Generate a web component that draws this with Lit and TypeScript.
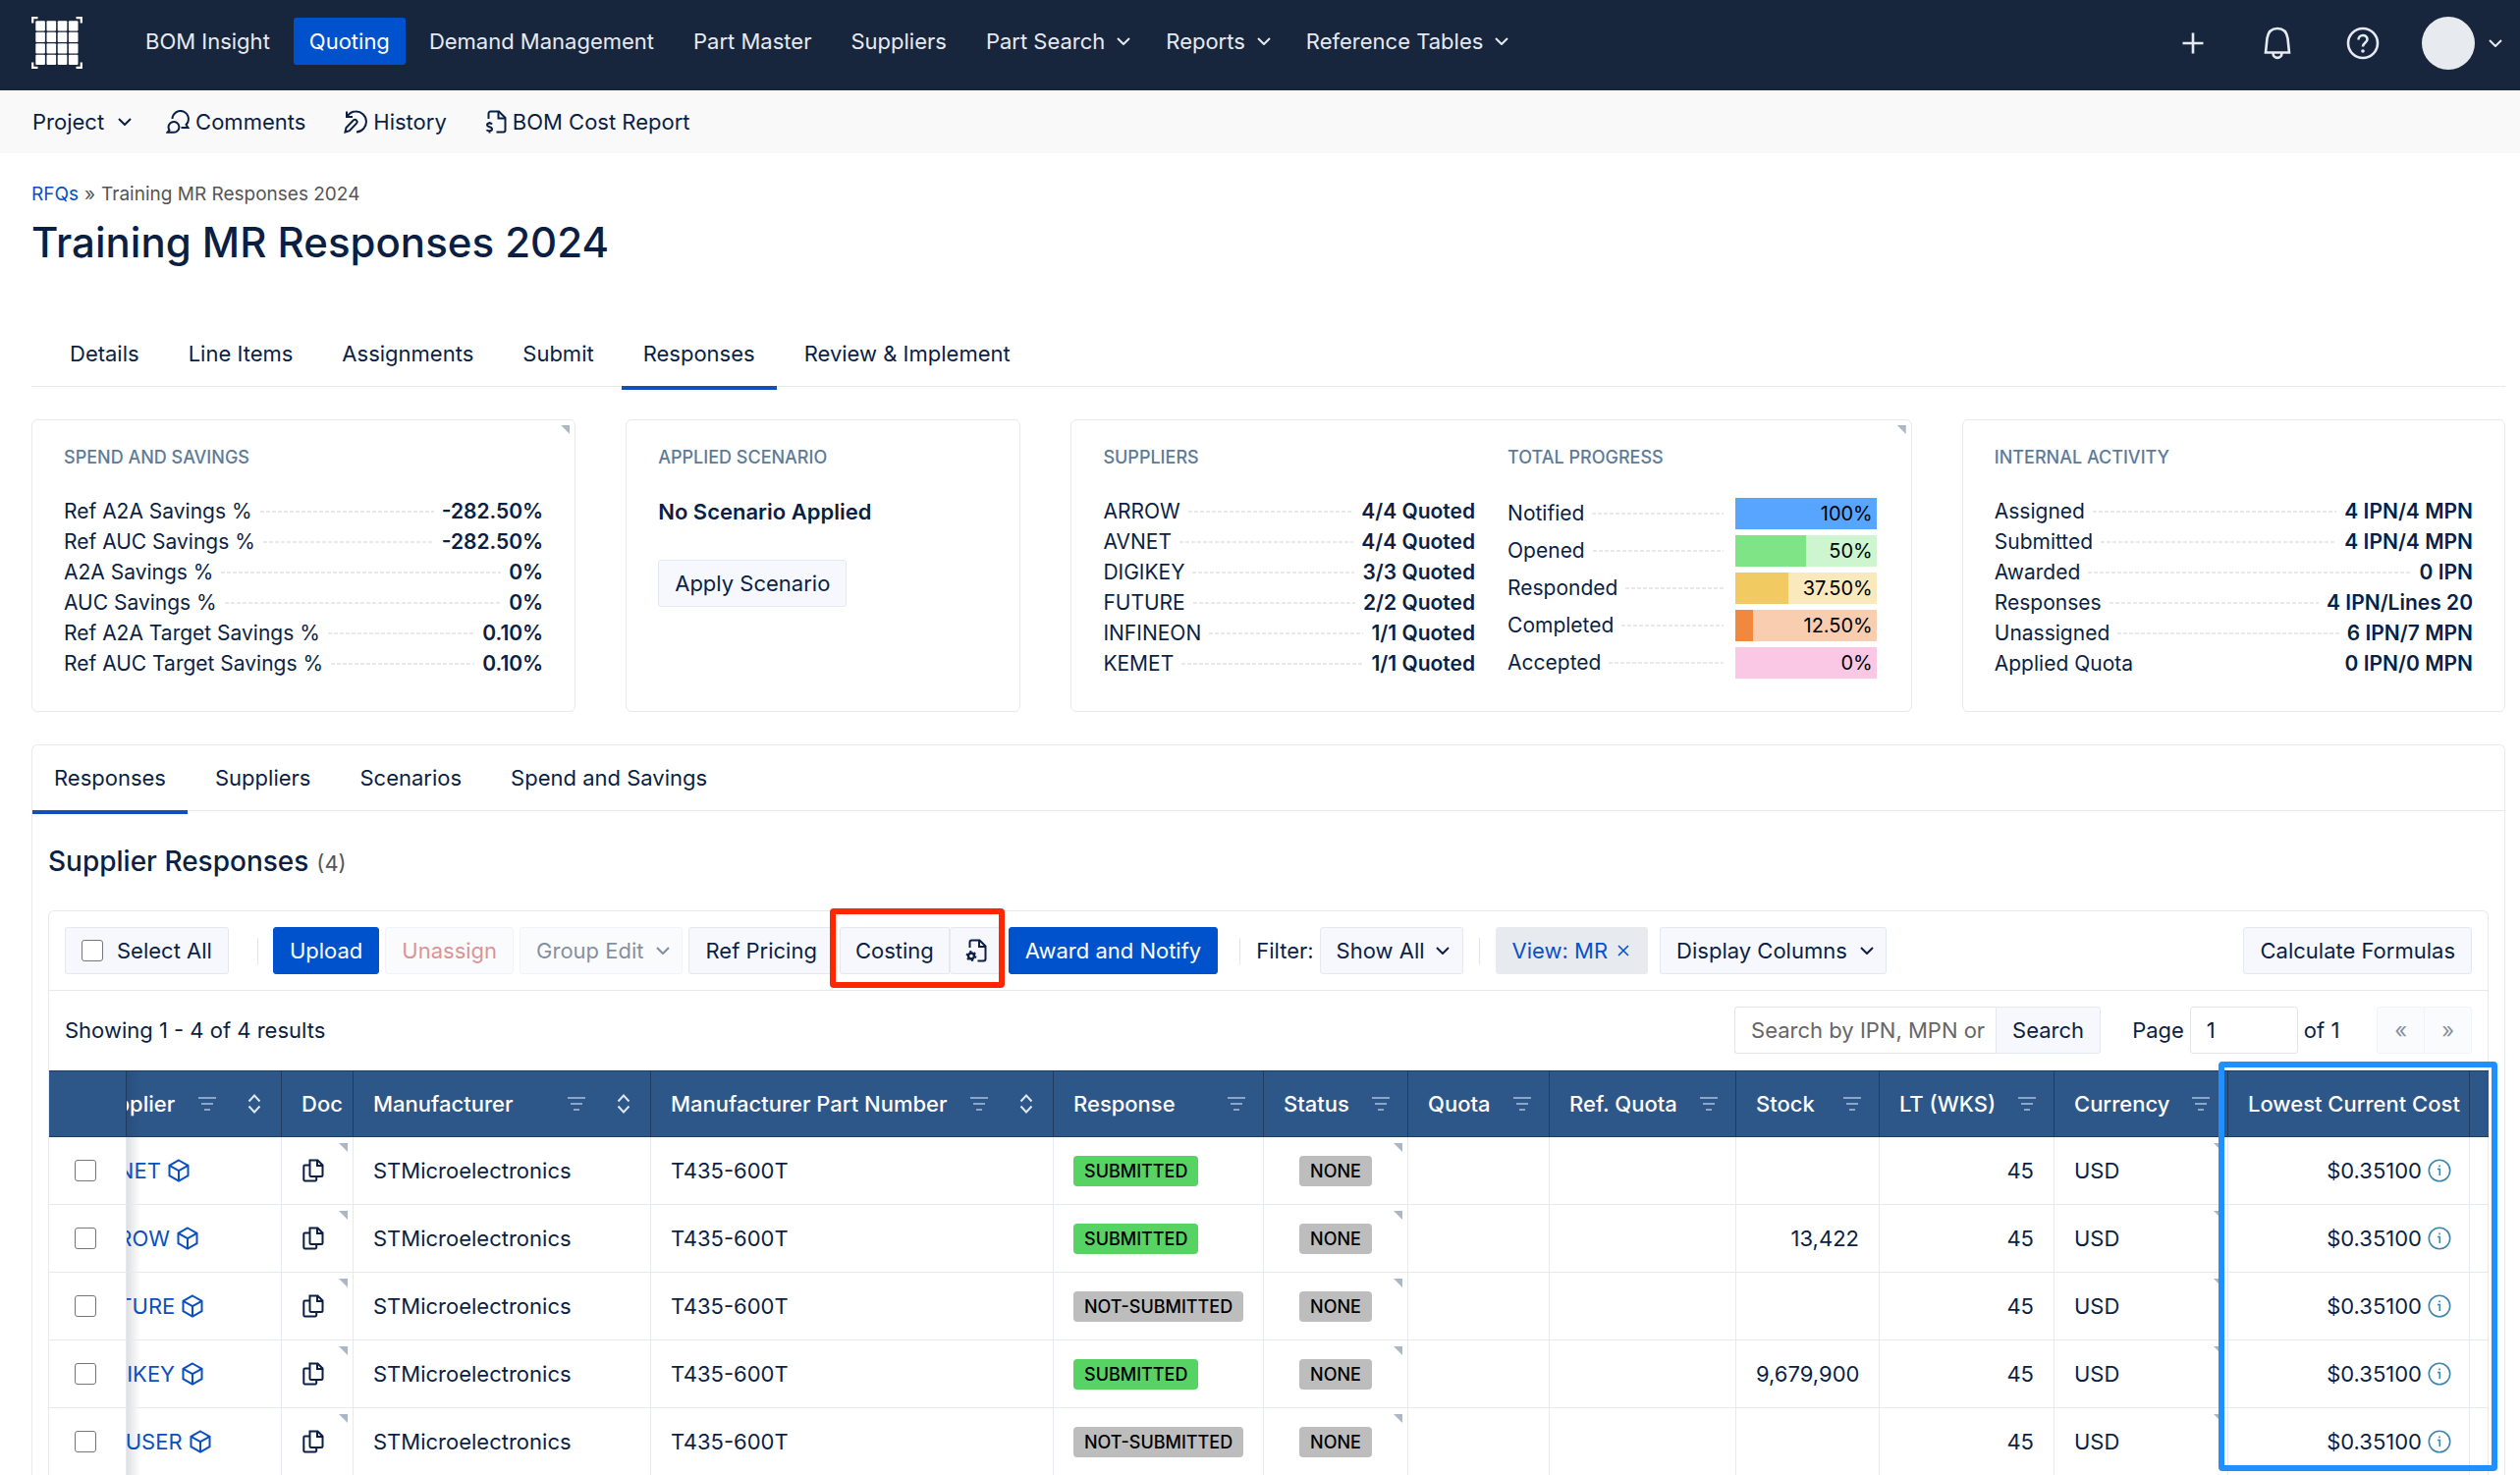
import { LitElement, html, css, svg, nothing, TemplateResult } from "lit";
import { customElement } from "lit/decorators.js";
import { styleMap } from "lit/directives/style-map.js";

const icon = (cls: string, w: number, h: number, body: TemplateResult | TemplateResult[]) => html`
  <svg class="icon ${cls}" width=${w} height=${h} viewBox="0 0 ${w} ${h}" aria-hidden="true">${body}</svg>`;

const chevron = () => icon("", 14, 8, svg`<path d="M1 1L7 7L13 1" />`);

const comments = () => icon("", 24, 24, svg`
  <path d="M6.5 9A8.2 8.2 0 1 1 20.5 15L22.5 18H15.5" />
  <path d="M3.5 20.5L1.5 22.8H8A5.4 5.4 0 1 0 3 19.5Z" />`);

const history = () => icon("", 24, 24, svg`
  <path d="M3 1.5V7H9" />
  <path d="M3.5 6.5C6 3 9 1.5 12 1.5A10.3 10.3 0 0 1 13 22.4" />
  <path d="M1.5 22.5L2.5 18L10 10.2A2.3 2.3 0 0 1 13.2 13.4L5.8 21.2Z" />`);

const costReport = () => icon("", 22, 24, svg`
  <path d="M3.5 9V3.5A2 2 0 0 1 5.500 1.500H14L20.500 8V20.500A2 2 0 0 1 18.500 22.500H11.500" />
  <path d="M13.500 1.500V8.500H20.500" />
  <path d="M7 14.500C6 13 2 13 2 15.300C2 17.800 7 16.800 7 19.400C7 21.700 2.500 21.700 1.500 20.200M4.500 12V13.500M4.500 21.500V23.500" />`);

const costingSettings = () => icon("", 22, 24, svg`
  <path d="M4.500 9V3.500A2 2 0 0 1 6.500 1.500H14.500L20.500 7.500V20.500A2 2 0 0 1 18.500 22.500H12.500" />
  <path d="M14 1.500V8H20.500" />
  <circle cx="6" cy="17.500" r="3" stroke-width="2.400" />
  <circle cx="6" cy="17.500" r="4.600" stroke-width="1.600" stroke-dasharray="2.200 2.617" />`);

const cube = () => icon("", 22, 24, svg`
  <path d="M11 1.500L20.500 6.800V17.200L11 22.500L1.500 17.200V6.800Z" />
  <path d="M1.500 6.800L11 12.200L20.500 6.800M11 12.200V22.500" />`);

const copyDoc = () => icon("", 24, 24, svg`
  <path d="M8.500 1.500H16.500L21.500 6.500V16.500A1.500 1.500 0 0 1 20 18H10A1.500 1.500 0 0 1 8.500 16.500Z" />
  <path d="M16 1.500V7H21.500" />
  <path d="M8.500 6.500H3.500A1.200 1.200 0 0 0 2.300 7.700V21.300A1.200 1.200 0 0 0 3.500 22.500H14A1.200 1.200 0 0 0 15.200 21.300V18" />`);

const info = () => icon("info", 24, 24, svg`
  <circle cx="12" cy="12" r="10.700" stroke-width="1.600" />
  <path d="M10 10.500H12.300V17M12.100 6.500V8.300" stroke-width="1.600" />`);

const filterIcon = () => icon("filter", 18, 16, svg`
  <path d="M0 2H18M3 8H15M6 14H12" />`);

const sortIcon = () => icon("sort", 14, 20, svg`
  <path d="M1.500 7.500L7 1.500L12.500 7.500M1.500 12.500L7 18.500L12.500 12.500" />`);

const plus = () => icon("", 24, 24, svg`<path d="M12 1.500V22.500M1.500 12H22.500" stroke-width="2.600" />`);

const bell = () => icon("", 28, 34, svg`
  <path d="M2 26.500H26L24.500 12C23.500 5.500 19.500 2 14 2S4.500 5.500 3.500 12Z" stroke-width="2.600" />
  <path d="M9.500 27C9.500 33.500 18.500 33.500 18.500 27" stroke-width="2.600" />`);

const help = () => icon("", 34, 34, svg`
  <circle cx="17" cy="17" r="15" stroke-width="2.600" />
  <path d="M12.500 13.500C12.500 7.500 21.500 7.500 21.500 13C21.500 16.500 17 16.500 17 20.500" stroke-width="2.600" />
  <circle cx="17" cy="25" r="1.800" class="solid" />`);

const logo = () => {
  const cells: TemplateResult[] = [];
  for (let r = 0; r < 4; r++) {
    for (let c = 0; c < 4; c++) {
      cells.push(svg`<rect class="solid" x=${4.3 + c * 11.2} y=${4.2 + r * 11.5} width="9.600" height="10.200" rx="1" />`);
    }
  }
  return icon("logo", 52, 54, [
    ...cells,
    svg`<path d="M1.200 6.500V1.200H6.500M45.500 1.200H50.800V6.500M50.800 46.500V51.800H45.500M6.500 51.800H1.200V46.500" stroke-width="2.200" />`,
  ]);
};

const corner = () => html`<span class="corner"></span>`;

interface Fact { label: string; value: string; plain?: boolean }
interface Bar { label: string; pct: number; text: string; fill: string; track: string }
interface Line { supplier: string; response: string; stock: string }

const SAVINGS: Fact[] = [
  { label: "Ref A2A Savings %", value: "-282.50%" },
  { label: "Ref AUC Savings %", value: "-282.50%" },
  { label: "A2A Savings %", value: "0%" },
  { label: "AUC Savings %", value: "0%" },
  { label: "Ref A2A Target Savings %", value: "0.10%" },
  { label: "Ref AUC Target Savings %", value: "0.10%" },
];

const SUPPLIERS: Fact[] = [
  { label: "ARROW", value: "4/4 Quoted" },
  { label: "AVNET", value: "4/4 Quoted" },
  { label: "DIGIKEY", value: "3/3 Quoted" },
  { label: "FUTURE", value: "2/2 Quoted" },
  { label: "INFINEON", value: "1/1 Quoted" },
  { label: "KEMET", value: "1/1 Quoted" },
];

const ACTIVITY: Fact[] = [
  { label: "Assigned", value: "4 IPN/4 MPN" },
  { label: "Submitted", value: "4 IPN/4 MPN" },
  { label: "Awarded", value: "0 IPN" },
  { label: "Responses", value: "4 IPN/Lines 20" },
  { label: "Unassigned", value: "6 IPN/7 MPN" },
  { label: "Applied Quota", value: "0 IPN/0 MPN", plain: true },
];

const PROGRESS: Bar[] = [
  { label: "Notified", pct: 100, text: "100%", fill: "#57a5ff", track: "#cfe4ff" },
  { label: "Opened", pct: 50, text: "50%", fill: "#7fe486", track: "#ccf5d0" },
  { label: "Responded", pct: 37.5, text: "37.50%", fill: "#f1cb61", track: "#f9e9bd" },
  { label: "Completed", pct: 12.5, text: "12.50%", fill: "#f0883e", track: "#f8cdb0" },
  { label: "Accepted", pct: 0, text: "0%", fill: "#f58ac8", track: "#fac8e4" },
];

const COLUMNS: { label: string; width: number; filter?: boolean; sort?: boolean }[] = [
  { label: "Doc", width: 73 },
  { label: "Manufacturer", width: 303, filter: true, sort: true },
  { label: "Manufacturer Part Number", width: 410, filter: true, sort: true },
  { label: "Response", width: 214, filter: true },
  { label: "Status", width: 147, filter: true },
  { label: "Quota", width: 144, filter: true },
  { label: "Ref. Quota", width: 190, filter: true },
  { label: "Stock", width: 146, filter: true },
  { label: "LT (WKS)", width: 178, filter: true },
  { label: "Currency", width: 177, filter: true },
  { label: "Lowest Current Cost", width: 246 },
];

const LINES: Line[] = [
  { supplier: "AVNET", response: "SUBMITTED", stock: "" },
  { supplier: "ARROW", response: "SUBMITTED", stock: "13,422" },
  { supplier: "FUTURE", response: "NOT-SUBMITTED", stock: "" },
  { supplier: "DIGIKEY", response: "SUBMITTED", stock: "9,679,900" },
  { supplier: "MOUSER", response: "NOT-SUBMITTED", stock: "" },
];

@customElement("app-root")
export class AppRoot extends LitElement {
  static styles = css`
    :host {
      display: block;
      min-height: 100vh;
      background: #fff;
      color: #0b1f44;
      font-family: Inter, "Liberation Sans", sans-serif;
      font-size: 22px;
      line-height: 30px;
    }
    * { box-sizing: border-box; }
    a { color: inherit; text-decoration: none; }
    button, input, select { font: inherit; color: inherit; margin: 0; }
    h1, h2, h3, p, dl, dd { margin: 0; font-weight: 400; }
    .icon { fill: none; stroke: currentColor; stroke-width: 2; flex: none; display: block; }
    .solid { fill: currentColor; stroke: none; }

    .top { display: flex; align-items: center; height: 92px; padding: 0 18px 4px 32px; background: #18263d; color: #e6eaf2; }
    .logo { color: #fff; margin-right: 48px; }
    .nav { display: flex; gap: 8px; flex: 1; margin-top: -4px; }
    .nav-item {
      display: flex; align-items: center; gap: 12px; height: 48px; padding: 0 16px;
      border: 0; border-radius: 3px; background: none; white-space: nowrap;
    }
    .nav-item.menu { padding-right: 12px; }
    .nav-item.current { background: #0052cc; color: #fff; }
    .tools { display: flex; align-items: center; }
    .tool { display: flex; padding: 0; border: 0; background: none; }
    .tool-add { margin-right: 60px; }
    .tool-bell { margin-right: 56px; }
    .tool-help { margin-right: 43px; }
    .tool-user { align-items: center; gap: 14px; }
    .avatar { width: 54px; height: 54px; border-radius: 50%; background: #e7ebf0; }

    .sub { display: flex; align-items: center; gap: 39px; height: 64px; padding: 0 33px; background: #f9f9f9; }
    .sub-item { display: flex; align-items: center; gap: 6px; padding: 0; border: 0; background: none; }
    .sub-menu { gap: 14px; margin-right: -4px; }

    .page { padding: 28px 15px 0 32px; }
    .crumbs { display: flex; gap: 6px; font-size: 19px; line-height: 28px; color: #555; }
    .link { color: #0b4fbf; }
    .title { margin-top: 8px; font-size: 42px; line-height: 54px; font-weight: 500; }
    .tabs { display: flex; gap: 6px; border-bottom: 1px solid #e8e9eb; }
    .page-tabs { margin-top: 53px; padding-left: 17px; }
    .tab { display: block; height: 70px; padding: 0 22px; line-height: 66px; margin-bottom: -4px; border-bottom: 4px solid transparent; }
    .tab.current { border-bottom-color: #0f50b9; }

    .cards { display: grid; grid-template-columns: 554fr 402fr 856fr 553fr; gap: 51px; margin-top: 33px; }
    .card { position: relative; padding: 26px 32px 33px; border: 1px solid #e8e9eb; border-radius: 6px; }
    .split { display: grid; grid-template-columns: 379fr 376fr; gap: 33px; padding-right: 35px; }
    .caption { margin-bottom: 27px; font-size: 18px; line-height: 24px; font-weight: 500; color: #5d7b99; }
    .fact { display: flex; align-items: center; gap: 8px; font-size: 21px; line-height: 31px; }
    .lead { flex: 1; height: 2px; background: repeating-linear-gradient(90deg, #e9e9eb 0 4px, transparent 4px 6px); }
    .lead.plain { background: none; }
    .fact-value { font-weight: 600; }
    .bars { display: grid; gap: 6px; padding-top: 2px; }
    .bar-row { display: grid; grid-template-columns: 1fr 144px; gap: 12px; line-height: 32px; }
    .bar-label { display: flex; align-items: center; gap: 8px; font-size: 21px; }
    .bar { display: grid; color: #000; font-size: 20px; text-align: right; }
    .bar-fill, .bar-text { grid-area: 1 / 1; }
    .bar-text { padding-right: 4px; }
    .scenario { font-weight: 600; line-height: 32px; margin-bottom: 33px; }
    .corner { position: absolute; top: 5px; right: 5px; width: 9px; height: 9px; background: #a9b7c6; clip-path: polygon(0 0, 100% 0, 100% 100%); }

    .btn {
      display: inline-flex; align-items: center; gap: 14px; height: 48px; padding: 0 16px;
      border: 1px solid #e4e8ef; border-radius: 3px; background: #f6f8fd; white-space: nowrap;
    }
    .btn.menu { gap: 13px; padding-right: 12px; }
    .btn.primary { background: #0052cc; border-color: #0052cc; color: #fff; }
    .btn:disabled { opacity: 0.5; color: #0b1f44; }
    .btn.danger:disabled { color: #b82a2a; }
    .btn.chosen { background: #e7ebf0; border-color: #e7ebf0; color: #0b50c8; gap: 10px; padding-right: 18px; }

    .panel { margin-top: 33px; border: 1px solid #e8e9eb; border-bottom: 0; border-radius: 6px 6px 0 0; }
    .panel-body { padding: 33px 16px 0; }
    .heading { display: flex; align-items: baseline; gap: 8px; font-size: 28px; line-height: 36px; font-weight: 500; margin-bottom: 30px; }
    .count { font-size: 22px; font-weight: 400; color: #555; }
    .box { border: 1px solid #e8e9eb; border-bottom: 0; border-radius: 6px 6px 0 0; }
    .toolbar { display: flex; align-items: center; gap: 6px; padding: 16px; border-bottom: 1px solid #e8e9eb; }
    .rule { width: 1px; height: 27px; background: #e3e5ea; }
    .rule-a { margin: 0 9px 0 23px; }
    .rule-b { margin: 0 10px 0 16px; }
    .rule-c { margin: 0 10px 0 10px; }
    .push { margin-left: auto; }
    .check { width: 22px; height: 22px; margin: 0; appearance: none; background: #fff; border: 1px solid #767676; border-radius: 3px; }
    .pair { position: relative; display: flex; }
    .pair .btn:first-child { border-radius: 3px 0 0 3px; }
    .pair .btn:last-child { border-left: 0; border-radius: 0 3px 3px 0; }
    .costing .btn { padding: 0 15px; }
    .pager .btn { padding: 0 17px; }
    .marker { position: absolute; border: 6px solid; border-radius: 4px; pointer-events: none; }
    .marker-red { color: #ff2600; inset: -19px -2px -14px -10px; }
    .pick { display: inline-grid; align-items: center; }
    .pick .btn, .pick .icon { grid-area: 1 / 1; }
    .pick .btn { appearance: none; padding-right: 38px; }
    .pick .icon { justify-self: end; margin-right: 14px; pointer-events: none; }
    .views { margin-left: 6px; }

    .results { display: flex; align-items: center; padding: 16px 16px 17px; }
    .field { height: 48px; border: 1px solid #e4e5e8; border-radius: 3px; background: #fff; padding: 0 16px; }
    .search { display: flex; margin: 0 32px 0 auto; }
    .search .field { width: 266px; padding-right: 0; border-radius: 3px 0 0 3px; border-right: 0; }
    .search .field::placeholder { color: #666; opacity: 1; }
    .search .btn { border-radius: 0 3px 3px 0; }
    .page-no { display: flex; align-items: center; gap: 6px; margin-right: 38px; }
    .page-no .field { width: 110px; }

    .table-wrap { position: relative; }
    .marker-blue { color: #1e90ff; top: -9px; right: -10px; bottom: 5px; width: 284px; }
    .grid { width: 100%; table-layout: fixed; border-collapse: separate; border-spacing: 0; }
    .grid th {
      height: 68px; padding: 0 18px 0 20px; background: #2d5789; color: #fff; font-weight: 500; text-align: left; white-space: nowrap;
      border: 0 solid #1f3b61; border-width: 1px 1px 1px 0;
    }
    .grid td { position: relative; height: 69px; padding: 0 20px; border: 0 solid #e6e9ee; border-width: 0 1px 1px 0; overflow: hidden; white-space: nowrap; }
    .grid th:last-child, .grid td:last-child { border-right: 0; }
    .head { display: flex; align-items: center; }
    .head .filter { margin-left: auto; color: #8ba6c8; }
    .head .sort { margin-left: 32px; margin-right: 2px; color: #dce7f5; }
    .grid th.tight { padding-right: 0; }
    .grid .pin { padding: 0 0 0 26px; }
    .grid .slid { overflow: hidden; background-image: linear-gradient(90deg, rgb(20 30 50 / 0.14), transparent 14px); background-repeat: no-repeat; }
    .slid-content { display: flex; align-items: center; margin-left: -58px; gap: 7px; }
    .head.slid-content { gap: 0; }
    .cell { display: flex; align-items: center; gap: 6px; }
    .cell.end { justify-content: flex-end; }
    .cell.mid { justify-content: center; }
    .copy { display: flex; padding: 0; border: 0; background: none; }
    .grid .cost { padding-right: 18px; }
    .info { color: #3d86ac; }
    .tag { height: 31px; padding: 0 11px; border-radius: 4px; background: #bdbdbd; color: #000; font-size: 18px; line-height: 31px; font-weight: 500; }
    .tag.good { background: #57d364; }
    .grid td .corner { top: 6px; }
    .num { text-align: right; }
  `;

  private facts(rows: Fact[]) {
    return html`<dl>${rows.map((r) => html`
      <div class="fact"><dt>${r.label}</dt><span class="lead ${r.plain ? "plain" : ""}"></span><dd class="fact-value">${r.value}</dd></div>`)}</dl>`;
  }

  private tabs(cls: string, labels: string[], current: string) {
    return html`<nav class="tabs ${cls}">${labels.map((l) => html`<a href="#" class="tab ${l === current ? "current" : ""}">${l}</a>`)}</nav>`;
  }

  private header() {
    return html`
      <header class="top">
        ${logo()}
        <nav class="nav">
          <a href="#" class="nav-item">BOM Insight</a>
          <a href="#" class="nav-item current">Quoting</a>
          <a href="#" class="nav-item">Demand Management</a>
          <a href="#" class="nav-item">Part Master</a>
          <a href="#" class="nav-item">Suppliers</a>
          <button class="nav-item menu">Part Search ${chevron()}</button>
          <button class="nav-item menu">Reports ${chevron()}</button>
          <button class="nav-item menu">Reference Tables ${chevron()}</button>
        </nav>
        <div class="tools">
          <button class="tool tool-add" aria-label="Add">${plus()}</button>
          <button class="tool tool-bell" aria-label="Notifications">${bell()}</button>
          <button class="tool tool-help" aria-label="Help">${help()}</button>
          <button class="tool tool-user" aria-label="Account"><span class="avatar"></span>${chevron()}</button>
        </div>
      </header>
      <div class="sub">
        <button class="sub-item sub-menu">Project ${chevron()}</button>
        <a href="#" class="sub-item">${comments()}Comments</a>
        <a href="#" class="sub-item">${history()}History</a>
        <a href="#" class="sub-item">${costReport()}BOM Cost Report</a>
      </div>`;
  }

  private cards() {
    return html`
      <section class="cards">
        <div class="card">
          ${corner()}
          <h3 class="caption">SPEND AND SAVINGS</h3>
          ${this.facts(SAVINGS)}
        </div>
        <div class="card">
          <h3 class="caption">APPLIED SCENARIO</h3>
          <p class="scenario">No Scenario Applied</p>
          <button class="btn">Apply Scenario</button>
        </div>
        <div class="card split">
          ${corner()}
          <div>
            <h3 class="caption">SUPPLIERS</h3>
            ${this.facts(SUPPLIERS)}
          </div>
          <div>
            <h3 class="caption">TOTAL PROGRESS</h3>
            <div class="bars">${PROGRESS.map((b) => html`
              <div class="bar-row">
                <div class="bar-label"><span>${b.label}</span><span class="lead"></span></div>
                <div class="bar" style=${styleMap({ background: b.track })}>
                  <span class="bar-fill" style=${styleMap({ width: `${b.pct}%`, background: b.fill })}></span>
                  <span class="bar-text">${b.text}</span>
                </div>
              </div>`)}</div>
          </div>
        </div>
        <div class="card">
          <h3 class="caption">INTERNAL ACTIVITY</h3>
          ${this.facts(ACTIVITY)}
        </div>
      </section>`;
  }

  private toolbar() {
    return html`
      <div class="toolbar">
        <label class="btn"><input class="check" type="checkbox" />Select All</label>
        <span class="rule rule-a"></span>
        <button class="btn primary">Upload</button>
        <button class="btn danger" disabled>Unassign</button>
        <button class="btn menu" disabled>Group Edit ${chevron()}</button>
        <button class="btn">Ref Pricing</button>
        <div class="pair costing">
          <button class="btn">Costing</button>
          <button class="btn" aria-label="Costing settings">${costingSettings()}</button>
          <span class="marker marker-red"></span>
        </div>
        <button class="btn primary">Award and Notify</button>
        <span class="rule rule-b"></span>
        <label for="filter">Filter:</label>
        <span class="pick"><select id="filter" class="btn"><option>Show All</option></select>${chevron()}</span>
        <span class="rule rule-c"></span>
        <button class="btn chosen">View: MR ${icon("", 12, 12, svg`<path d="M1 1L11 11M11 1L1 11" stroke-width="1.600" />`)}</button>
        <button class="btn menu views">Display Columns ${chevron()}</button>
        <button class="btn push">Calculate Formulas</button>
      </div>
      <div class="results">
        <span>Showing 1 - 4 of 4 results</span>
        <div class="search">
          <input class="field" type="text" aria-label="Search" placeholder="Search by IPN, MPN or" />
          <button class="btn">Search</button>
        </div>
        <div class="page-no">
          <label for="page">Page</label>
          <input id="page" class="field" type="text" .value=${"1"} />
          <span>of 1</span>
        </div>
        <div class="pair pager">
          <button class="btn" disabled aria-label="Previous">«</button>
          <button class="btn" disabled aria-label="Next">»</button>
        </div>
      </div>`;
  }

  private table() {
    return html`
      <div class="table-wrap">
        <table class="grid">
          <colgroup>
            <col width="79" /><col width="158" />
            ${COLUMNS.map((c) => html`<col width=${c.width} />`)}
            <col width="19" />
          </colgroup>
          <thead>
            <tr>
              <th class="pin"></th>
              <th class="slid"><div class="head slid-content">Supplier ${filterIcon()}${sortIcon()}</div></th>
              ${COLUMNS.map((c) => html`
                <th class=${c.filter ? "" : "tight"}><div class="head">${c.label}${c.filter ? filterIcon() : nothing}${c.sort ? sortIcon() : nothing}</div></th>`)}
              <th class="tight"></th>
            </tr>
          </thead>
          <tbody>${LINES.map((l) => html`
            <tr>
              <td class="pin"><div class="cell"><input class="check" type="checkbox" aria-label="Select ${l.supplier}" /></div></td>
              <td class="slid"><a href="#" class="link slid-content">${l.supplier}${cube()}</a></td>
              <td><button class="copy" aria-label="Documents">${copyDoc()}</button>${corner()}</td>
              <td>STMicroelectronics</td>
              <td>T435-600T</td>
              <td><div class="cell"><span class="tag ${l.response === "SUBMITTED" ? "good" : ""}">${l.response}</span></div></td>
              <td><div class="cell mid"><span class="tag">NONE</span></div>${corner()}</td>
              <td></td>
              <td></td>
              <td class="num">${l.stock}</td>
              <td class="num">45</td>
              <td>USD${corner()}</td>
              <td class="cost"><div class="cell end">$0.35100${info()}</div></td>
              <td></td>
            </tr>`)}
          </tbody>
        </table>
        <span class="marker marker-blue"></span>
      </div>`;
  }

  render() {
    return html`
      ${this.header()}
      <main class="page">
        <nav class="crumbs"><a href="#" class="link">RFQs</a><span>»</span><span>Training MR Responses 2024</span></nav>
        <h1 class="title">Training MR Responses 2024</h1>
        ${this.tabs("page-tabs", ["Details", "Line Items", "Assignments", "Submit", "Responses", "Review & Implement"], "Responses")}
        ${this.cards()}
        <section class="panel">
          ${this.tabs("", ["Responses", "Suppliers", "Scenarios", "Spend and Savings"], "Responses")}
          <div class="panel-body">
            <h2 class="heading">Supplier Responses <span class="count">(4)</span></h2>
            <div class="box">
              ${this.toolbar()}
              ${this.table()}
            </div>
          </div>
        </section>
      </main>`;
  }
}
